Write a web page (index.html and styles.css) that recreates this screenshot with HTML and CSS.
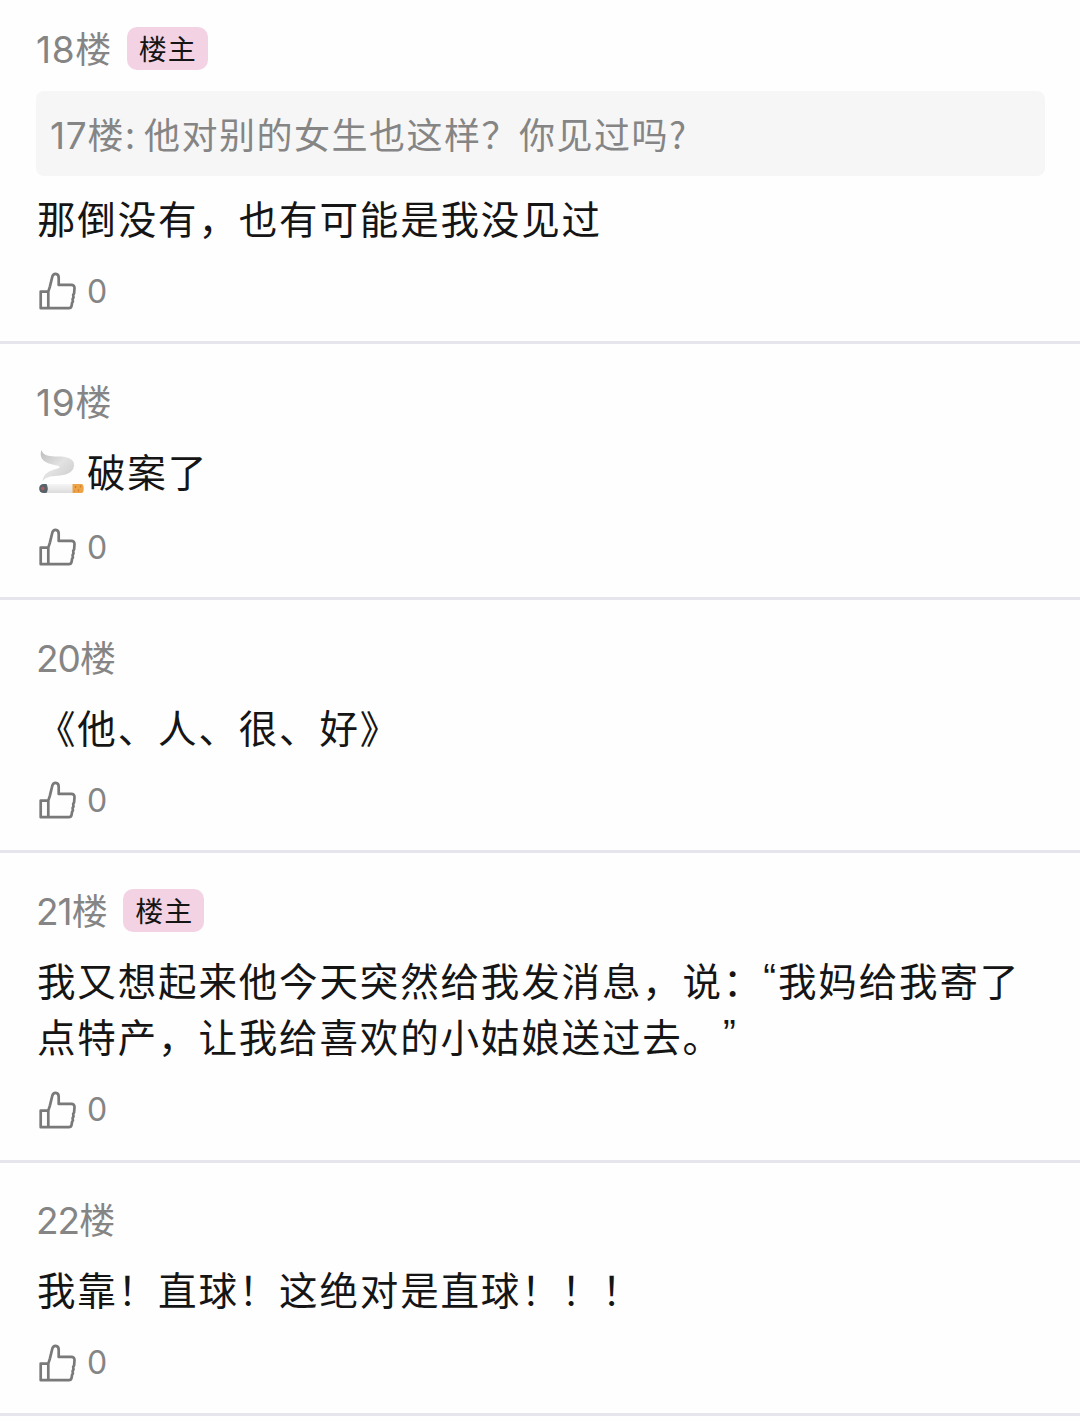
FILE: index.html
```html
<!DOCTYPE html>
<html lang="zh-CN">
<head>
<meta charset="utf-8">
<title>评论</title>
<link rel="stylesheet" href="styles.css">
</head>
<body>
<svg width="0" height="0" class="defs" aria-hidden="true">
  <symbol id="thumb" viewBox="0 0 44 40">
    <path d="M11.6 20.6H3.7V37.2H31.8Q34.200 37.2 34.600 34.8L35.100 31.8L35.900 30.6L35.600 28L36.500 26.500L36.200 24L37.100 22.300L37.5 17.2Q37.600 14 34.2 13.900H21.7V6.9Q21.7 3.100 18.700 2.900Q16.100 2.8 15.3 5.700L12.900 15.600L11.3 20.6V37.2" fill="none" stroke="#797979" stroke-width="2.7" stroke-linejoin="round"/>
  </symbol>
</svg>
<main class="thread">
  <article class="post">
    <header class="head"><span class="floor"><span class="num teen">18</span>楼</span><span class="badge">楼主</span></header>
    <blockquote class="quote"><span class="num teen">17</span>楼<span class="colon">:</span> 他对别的女生也这样？你见过吗?</blockquote>
    <p class="body">那倒没有，也有可能是我没见过</p>
    <footer class="like"><svg class="icon"><use href="#thumb"/></svg><span>0</span></footer>
  </article>
  <article class="post">
    <header class="head"><span class="floor"><span class="num teen">19</span>楼</span></header>
    <p class="body with-emoji"><svg class="emoji" viewBox="0 0 50 48" role="img" aria-label="香烟">
      <defs>
        <linearGradient id="smoke" x1="0" y1="0" x2="1" y2="1"><stop offset="0" stop-color="#bdbdbd"/><stop offset=".5" stop-color="#e2e2e2"/><stop offset="1" stop-color="#cacaca"/></linearGradient>
        <linearGradient id="paper" x1="0" y1="0" x2="0" y2="1"><stop offset="0" stop-color="#f5f5f5"/><stop offset="1" stop-color="#dcdcdc"/></linearGradient>
      </defs>
      <path d="M4.500 4C6 10 13 10.500 21 10.500C31 10.500 38 13 37 20C36 28 27 29.500 18 30C11 30.500 8 32 5.500 35.500C6 28 12 25 19 23C23 22 24 20.500 20 19.500C10 18 1 14 4.500 4Z" fill="url(#smoke)"/>
      <rect x="6" y="38" width="31" height="9" fill="url(#paper)"/>
      <path d="M35.500 38H44.500Q46.700 38 46.700 42.500T44.500 47H35.500Z" fill="#eda348"/>
      <path d="M38.500 40V42M41.500 43.500V45.500M43.500 39.500V41.500M37.500 44.500V45.500" stroke="#d07c28" stroke-width="1.200"/>
      <path d="M6 38H9.500Q12 42.500 9.500 47H6Q2.200 46.500 2.200 42.500T6 38Z" fill="#596169"/>
      <circle cx="5.800" cy="42.500" r="1.800" fill="#a7605f"/>
    </svg>破案了</p>
    <footer class="like"><svg class="icon"><use href="#thumb"/></svg><span>0</span></footer>
  </article>
  <article class="post">
    <header class="head"><span class="floor"><span class="num">20</span>楼</span></header>
    <p class="body">《他、人、很、好》</p>
    <footer class="like"><svg class="icon"><use href="#thumb"/></svg><span>0</span></footer>
  </article>
  <article class="post">
    <header class="head"><span class="floor"><span class="num">21</span>楼</span><span class="badge">楼主</span></header>
    <p class="body">我又想起来他今天突然给我发消息，说：<span class="mark">“</span>我妈给我寄了点特产，让我给喜欢的小姑娘送过去。<span class="mark">”</span></p>
    <footer class="like"><svg class="icon"><use href="#thumb"/></svg><span>0</span></footer>
  </article>
  <article class="post">
    <header class="head"><span class="floor"><span class="num">22</span>楼</span></header>
    <p class="body">我靠！直球！这绝对是直球！！！</p>
    <footer class="like"><svg class="icon"><use href="#thumb"/></svg><span>0</span></footer>
  </article>
</main>
</body>
</html>
```
FILE: styles.css
```css
* { box-sizing: border-box; }
body {
  margin: 0;
  background: #fefefe;
  color: #151515;
  font-family: "Noto Sans CJK SC", sans-serif;
  text-spacing-trim: space-all;
  overflow: hidden;
}
.defs { display: block; }
.post {
  padding: 32px 35px 30px 36px;
  border-bottom: 3px solid #e6e5ee;
}
.post:first-child { padding-top: 23px; }
.head {
  display: flex;
  align-items: center;
  height: 50px;
  gap: 15px;
}
.floor {
  font-size: 36px;
  line-height: 50px;
  letter-spacing: 0.5px;
  color: #858585;
}
.num {
  font-family: Inter, sans-serif;
  font-size: 37px;
  letter-spacing: -1px;
}
.teen { letter-spacing: 0.7px; }
.badge {
  height: 43px;
  padding: 0 11px 0 12px;
  border-radius: 10px;
  background: #f3d3e3;
  font-size: 28px;
  line-height: 43px;
  letter-spacing: 1px;
}
.quote {
  height: 85px;
  margin: 18px 0 -2px;
  padding-left: 14px;
  border-radius: 8px;
  background: #f6f6f6;
  color: #858585;
  font-size: 36px;
  line-height: 85px;
  letter-spacing: 1.5px;
}
.colon { letter-spacing: -0.5px; }
.body {
  margin: 15.75px 0 25.75px 1px;
  font-size: 38.5px;
  line-height: 56.5px;
  letter-spacing: 1.85px;
}
.quote + .body { margin: 14.5px 0 26px 1px; }
.with-emoji {
  display: flex;
  align-items: center;
  margin-bottom: 28.75px;
}
.emoji {
  width: 50px;
  height: 48px;
}
.mark {
  font-family: "Liberation Sans", sans-serif;
  line-height: 0;
  vertical-align: 5px;
}
.like {
  display: flex;
  align-items: center;
  gap: 6px;
  height: 40px;
  margin-left: 1px;
  color: #858585;
  font-family: Inter, sans-serif;
  font-size: 32px;
}
.icon {
  width: 44px;
  height: 40px;
}
```
